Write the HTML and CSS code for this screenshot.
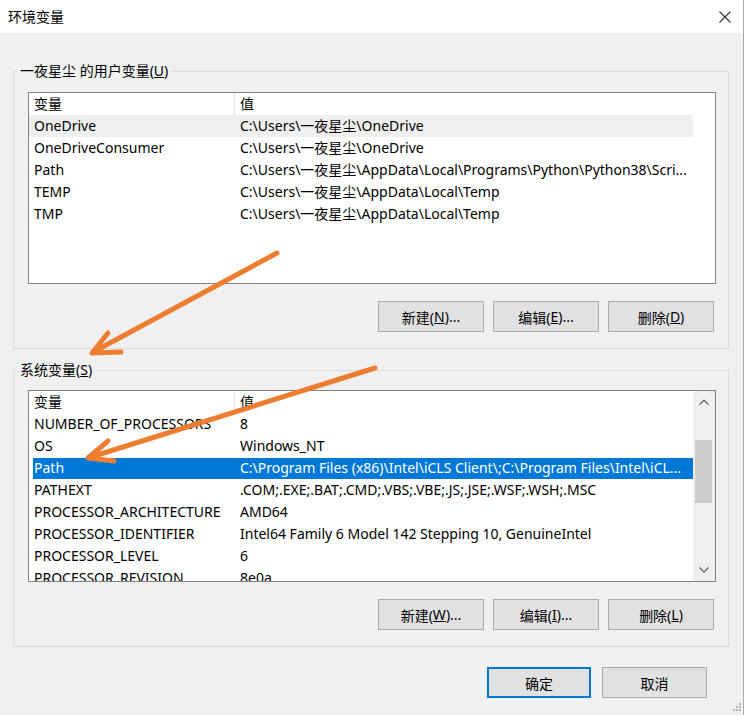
FILE: index.html
```html
<!DOCTYPE html>
<html lang="zh-CN">
<head>
<meta charset="utf-8">
<title>环境变量</title>
<link rel="stylesheet" href="styles.css">
</head>
<body>
<div class="window">
  <div class="titlebar">
    <span class="title">环境变量</span>
    <svg class="close" width="12" height="12" viewBox="0 0 12 12"><path d="M0.5 0.5 L11.5 11.5 M11.5 0.5 L0.5 11.5" stroke="#333" stroke-width="1.1" fill="none"/></svg>
  </div>
  <div class="content">
    <fieldset class="group">
      <legend>一夜星尘 的用户变量(<u>U</u>)</legend>
      <div class="list">
        <div class="rows">
          <div class="row head"><div class="c1">变量</div><div class="c2">值</div></div>
          <div class="row hover"><div class="c1">OneDrive</div><div class="c2">C:\Users\一夜星尘\OneDrive</div></div>
          <div class="row"><div class="c1">OneDriveConsumer</div><div class="c2">C:\Users\一夜星尘\OneDrive</div></div>
          <div class="row"><div class="c1">Path</div><div class="c2">C:\Users\一夜星尘\AppData\Local\Programs\Python\Python38\Scri...</div></div>
          <div class="row"><div class="c1">TEMP</div><div class="c2">C:\Users\一夜星尘\AppData\Local\Temp</div></div>
          <div class="row"><div class="c1">TMP</div><div class="c2">C:\Users\一夜星尘\AppData\Local\Temp</div></div>
        </div>
      </div>
      <div class="buttons">
        <div class="btn">新建(<u>N</u>)...</div>
        <div class="btn">编辑(<u>E</u>)...</div>
        <div class="btn">删除(<u>D</u>)</div>
      </div>
    </fieldset>

    <fieldset class="group system">
      <legend>系统变量(<u>S</u>)</legend>
      <div class="list list-sys">
        <div class="rows">
          <div class="row head"><div class="c1">变量</div><div class="c2">值</div></div>
          <div class="row"><div class="c1">NUMBER_OF_PROCESSORS</div><div class="c2">8</div></div>
          <div class="row"><div class="c1">OS</div><div class="c2">Windows_NT</div></div>
          <div class="row sel"><div class="c1">Path</div><div class="c2">C:\Program Files (x86)\Intel\iCLS Client\;C:\Program Files\Intel\iCL...</div></div>
          <div class="row"><div class="c1">PATHEXT</div><div class="c2">.COM;.EXE;.BAT;.CMD;.VBS;.VBE;.JS;.JSE;.WSF;.WSH;.MSC</div></div>
          <div class="row"><div class="c1">PROCESSOR_ARCHITECTURE</div><div class="c2">AMD64</div></div>
          <div class="row"><div class="c1">PROCESSOR_IDENTIFIER</div><div class="c2">Intel64 Family 6 Model 142 Stepping 10, GenuineIntel</div></div>
          <div class="row"><div class="c1">PROCESSOR_LEVEL</div><div class="c2">6</div></div>
          <div class="row"><div class="c1">PROCESSOR_REVISION</div><div class="c2">8e0a</div></div>
        </div>
        <div class="scrollbar">
          <div class="sb-btn"><svg width="10" height="6" viewBox="0 0 10 6"><path d="M0.5 5.5 L5 1 L9.5 5.5" stroke="#606060" stroke-width="1.2" fill="none"/></svg></div>
          <div class="thumb"></div>
          <div class="sb-space"></div>
          <div class="sb-btn"><svg width="10" height="6" viewBox="0 0 10 6"><path d="M0.5 0.5 L5 5 L9.5 0.5" stroke="#606060" stroke-width="1.2" fill="none"/></svg></div>
        </div>
      </div>
      <div class="buttons">
        <div class="btn">新建(<u>W</u>)...</div>
        <div class="btn">编辑(<u>I</u>)...</div>
        <div class="btn">删除(<u>L</u>)</div>
      </div>
    </fieldset>

    <div class="footer">
      <div class="btn btn-default">确定</div>
      <div class="btn btn-cancel">取消</div>
    </div>
  </div>

  <svg class="arrows" width="746" height="715" viewBox="0 0 746 715">
    <g stroke="#ed7d31" stroke-width="5" stroke-linecap="round" stroke-linejoin="round" fill="none">
      <line x1="277" y1="253" x2="95" y2="351"/>
      <polyline points="108,333 92,353 121,352"/>
      <line x1="375" y1="368" x2="91" y2="457"/>
      <polyline points="108,441 88,458 114,461"/>
    </g>
  </svg>
  <svg class="grip" width="10" height="10" viewBox="0 0 10 10">
    <g fill="#b0b0b0">
      <rect x="8" y="0" width="2" height="2"/>
      <rect x="5" y="3" width="2" height="2"/><rect x="8" y="3" width="2" height="2"/>
      <rect x="2" y="6" width="2" height="2"/><rect x="5" y="6" width="2" height="2"/><rect x="8" y="6" width="2" height="2"/>
    </g>
  </svg>
</div>
</body>
</html>
```
FILE: styles.css
```css
html, body {
  margin: 0;
  padding: 0;
  height: 715px;
}
body {
  background: #ffffff;
  font-family: "Noto Sans", "Noto Sans CJK SC", sans-serif;
  font-size: 14px;
  color: #000;
  overflow: hidden;
}
.window {
  position: relative;
  width: 743px;
  height: 715px;
  background: #f0f0f0;
  border-right: 1px solid #a9a9a9;
}
.titlebar {
  height: 33px;
  background: #fff;
  display: flex;
  align-items: center;
  justify-content: space-between;
  padding: 0 12px 0 8px;
}
.title {
  font-size: 14px;
  line-height: 20px;
}
.close {
  display: block;
  margin-top: 1px;
}
.content {
  padding: 0 14px 0 13px;
}
.group {
  margin: 28px 0 0;
  padding: 0 12px 16px 14px;
  border: 1px solid #dcdcdc;
  min-width: 0;
}
.group.system {
  margin-top: 11px;
}
.group legend {
  padding: 0 3px;
  margin-left: -11px;
  line-height: 20px;
}
.list {
  margin-top: 11px;
  height: 190px;
  border: 1px solid #828282;
  background: #fff;
  display: flex;
  overflow: hidden;
}
.list-sys {
  margin-top: 10px;
}
.rows {
  width: 664px;
  flex: none;
}
.row {
  display: grid;
  grid-template-columns: 206px 458px;
  height: 22px;
  line-height: 22px;
}
.row > div {
  padding-left: 5px;
  white-space: nowrap;
  overflow: hidden;
  box-sizing: border-box;
}
.row.head .c1 {
  border-right: 1px solid #e5e5e5;
}
.row.hover {
  background: #efefef;
}
.row.sel {
  background: linear-gradient(#0078d7, #0078d7) no-repeat 4px 1px / calc(100% - 4px) 21px;
  color: #fff;
}
.scrollbar {
  flex: 1;
  background: #f0f0f0;
  display: flex;
  flex-direction: column;
}
.sb-btn {
  height: 22px;
  display: flex;
  align-items: center;
  justify-content: center;
}
.sb-btn svg {
  display: block;
}
.thumb {
  margin: 27px 3px 0 2px;
  height: 63px;
  background: #cdcdcd;
}
.sb-space {
  flex: 1;
}
.buttons {
  display: flex;
  justify-content: flex-end;
  gap: 9px;
  margin-top: 17px;
  padding-right: 2px;
}
.btn {
  width: 106px;
  height: 31px;
  box-sizing: border-box;
  border: 1px solid #adadad;
  background: #e1e1e1;
  display: flex;
  align-items: center;
  justify-content: center;
  font-size: 14px;
}
.footer {
  display: flex;
  justify-content: flex-end;
  gap: 11px;
  margin-top: 20px;
  padding-right: 22px;
}
.btn-default {
  width: 104px;
  border: 2px solid #0078d7;
}
.btn-cancel {
  width: 105px;
}
.arrows {
  position: absolute;
  left: 0;
  top: 0;
  pointer-events: none;
}
.grip {
  position: absolute;
  right: 2px;
  bottom: 2px;
}
```
